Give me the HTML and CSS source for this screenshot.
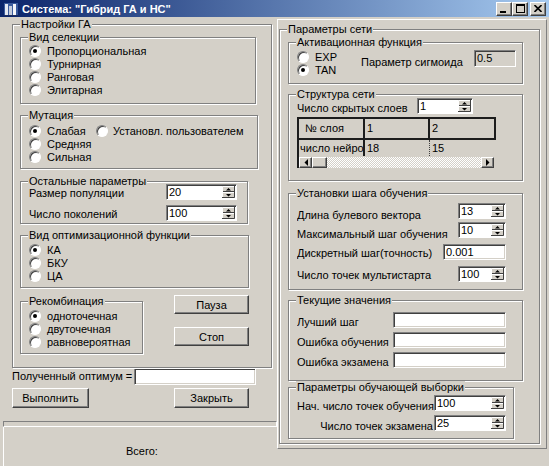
FILE: index.html
```html
<!DOCTYPE html>
<html lang="ru">
<head>
    <meta charset="UTF-8">
    <title>Система: "Гибрид ГА и НС"</title>
    <link rel="stylesheet" href="styles.css">
</head>
<body>
<div class="window">
    <div class="titlebar">
        <svg class="app-icon" width="14" height="14" viewBox="0 0 14 14">
            <rect x="0" y="1" width="14" height="13" fill="#3a5a9c"/>
            <rect x="1" y="2" width="3" height="11" fill="#e4e8f0"/>
            <rect x="5" y="4" width="3" height="9" fill="#c4ccdc"/>
            <rect x="9" y="2" width="3" height="11" fill="#f4f6fa"/>
            <path d="M0 13.5H14" stroke="#1c2c5c"/>
        </svg>
        <span class="title">Система: "Гибрид ГА и НС"</span>
        <div class="caption-buttons">
            <span class="cbtn"><svg width="8" height="8" viewBox="0 0 8 8"><rect x="0" y="6" width="6" height="2" fill="#000"/></svg></span>
            <span class="cbtn"><svg width="9" height="9" viewBox="0 0 9 9"><rect x="0.5" y="0.5" width="8" height="8" fill="none" stroke="#000"/><rect x="0" y="0" width="9" height="2" fill="#000"/></svg></span>
            <span class="cbtn close"><svg width="8" height="7" viewBox="0 0 8 7"><path d="M0.5 0L7.5 7M7.5 0L0.5 7" stroke="#000" stroke-width="1.6"/></svg></span>
        </div>
    </div>

    <div class="client">
        <div class="left-col">
            <div class="left-panel">
                <div class="group ga-settings">
                    <span class="group-title">Настройки ГА</span>

                    <div class="group selection">
                        <span class="group-title">Вид селекции</span>
                        <div class="opt"><span class="radio checked"></span>Пропорциональная</div>
                        <div class="opt"><span class="radio"></span>Турнирная</div>
                        <div class="opt"><span class="radio"></span>Ранговая</div>
                        <div class="opt"><span class="radio"></span>Элитарная</div>
                    </div>

                    <div class="group mutation">
                        <span class="group-title">Мутация</span>
                        <div class="opt-line">
                            <div class="opt"><span class="radio checked"></span>Слабая</div>
                            <div class="opt"><span class="radio"></span>Установл. пользователем</div>
                        </div>
                        <div class="opt"><span class="radio"></span>Средняя</div>
                        <div class="opt"><span class="radio"></span>Сильная</div>
                    </div>

                    <div class="group other-params">
                        <span class="group-title">Остальные параметры</span>
                        <div class="field">
                            <span class="lbl">Размер популяции</span>
                            <div class="spin"><span class="val">20</span><svg width="13" height="12" viewBox="0 0 13 12"><rect width="13" height="12" fill="#d4d0c8"/><path d="M0.5 12V0.5H12" stroke="#fff" fill="none"/><path d="M0 11.5H12.5V0" stroke="#404040" fill="none"/><path d="M1 5.5H12" stroke="#404040"/><path d="M1 6.5H12" stroke="#fff"/><path d="M4 4.5H9L6.5 2Z M4 8H9L6.5 10.5Z" fill="#000"/></svg></div>
                        </div>
                        <div class="field">
                            <span class="lbl">Число поколений</span>
                            <div class="spin"><span class="val">100</span><svg width="13" height="12" viewBox="0 0 13 12"><rect width="13" height="12" fill="#d4d0c8"/><path d="M0.5 12V0.5H12" stroke="#fff" fill="none"/><path d="M0 11.5H12.5V0" stroke="#404040" fill="none"/><path d="M1 5.5H12" stroke="#404040"/><path d="M1 6.5H12" stroke="#fff"/><path d="M4 4.5H9L6.5 2Z M4 8H9L6.5 10.5Z" fill="#000"/></svg></div>
                        </div>
                    </div>

                    <div class="group opt-func">
                        <span class="group-title">Вид оптимизационной функции</span>
                        <div class="opt"><span class="radio checked"></span>КА</div>
                        <div class="opt"><span class="radio"></span>БКУ</div>
                        <div class="opt"><span class="radio"></span>ЦА</div>
                    </div>

                    <div class="recomb-row">
                        <div class="group recomb">
                            <span class="group-title">Рекомбинация</span>
                            <div class="opt"><span class="radio checked"></span>одноточечная</div>
                            <div class="opt"><span class="radio"></span>двуточечная</div>
                            <div class="opt"><span class="radio"></span>равновероятная</div>
                        </div>
                        <div class="side-buttons">
                            <button class="btn">Пауза</button>
                            <button class="btn">Стоп</button>
                        </div>
                    </div>
                </div>

                <div class="optimum-row">
                    <span class="lbl">Полученный оптимум =</span>
                    <div class="edit"></div>
                </div>

                <div class="action-row">
                    <button class="btn btn-run">Выполнить</button>
                    <button class="btn btn-close">Закрыть</button>
                </div>
            </div>
            <div class="progress"></div>
            <div class="status">Всего:</div>
        </div>

        <div class="right-panel">
            <div class="group net-params">
                <span class="group-title">Параметры сети</span>

                <div class="group activation">
                    <span class="group-title">Активационная функция</span>
                    <div class="radio-col">
                        <div class="opt"><span class="radio"></span>EXP</div>
                        <div class="opt"><span class="radio checked"></span>TAN</div>
                    </div>
                    <div class="sigmoid">
                        <span class="lbl">Параметр сигмоида</span>
                        <div class="edit disabled">0.5</div>
                    </div>
                </div>

                <div class="group structure">
                    <span class="group-title">Структура сети</span>
                    <div class="field">
                        <span class="lbl">Число скрытых слоев</span>
                        <div class="spin"><span class="val">1</span><svg width="13" height="12" viewBox="0 0 13 12"><rect width="13" height="12" fill="#d4d0c8"/><path d="M0.5 12V0.5H12" stroke="#fff" fill="none"/><path d="M0 11.5H12.5V0" stroke="#404040" fill="none"/><path d="M1 5.5H12" stroke="#404040"/><path d="M1 6.5H12" stroke="#fff"/><path d="M4 4.5H9L6.5 2Z M4 8H9L6.5 10.5Z" fill="#000"/></svg></div>
                    </div>
                    <div class="grid">
                        <div class="grid-row grid-head">
                            <div class="cell">№ слоя</div>
                            <div class="cell">1</div>
                            <div class="cell">2</div>
                        </div>
                        <div class="grid-row grid-body">
                            <div class="cell">число нейронов</div>
                            <div class="cell focus">18</div>
                            <div class="cell">15</div>
                        </div>
                        <div class="hscroll">
                            <span class="sb-btn"><svg width="4" height="7" viewBox="0 0 4 7"><path d="M4 0V7L0.5 3.5Z" fill="#000"/></svg></span>
                            <span class="sb-thumb"></span>
                            <span class="sb-track"></span>
                            <span class="sb-btn"><svg width="4" height="7" viewBox="0 0 4 7"><path d="M0 0V7L3.5 3.5Z" fill="#000"/></svg></span>
                        </div>
                    </div>
                </div>

                <div class="group training">
                    <span class="group-title">Установки шага обучения</span>
                    <div class="field low">
                        <span class="lbl">Длина булевого вектора</span>
                        <div class="spin"><span class="val">13</span><svg width="13" height="12" viewBox="0 0 13 12"><rect width="13" height="12" fill="#d4d0c8"/><path d="M0.5 12V0.5H12" stroke="#fff" fill="none"/><path d="M0 11.5H12.5V0" stroke="#404040" fill="none"/><path d="M1 5.5H12" stroke="#404040"/><path d="M1 6.5H12" stroke="#fff"/><path d="M4 4.5H9L6.5 2Z M4 8H9L6.5 10.5Z" fill="#000"/></svg></div>
                    </div>
                    <div class="field low">
                        <span class="lbl">Максимальный шаг обучения</span>
                        <div class="spin"><span class="val">10</span><svg width="13" height="12" viewBox="0 0 13 12"><rect width="13" height="12" fill="#d4d0c8"/><path d="M0.5 12V0.5H12" stroke="#fff" fill="none"/><path d="M0 11.5H12.5V0" stroke="#404040" fill="none"/><path d="M1 5.5H12" stroke="#404040"/><path d="M1 6.5H12" stroke="#fff"/><path d="M4 4.5H9L6.5 2Z M4 8H9L6.5 10.5Z" fill="#000"/></svg></div>
                    </div>
                    <div class="field wide">
                        <span class="lbl">Дискретный шаг(точность)</span>
                        <div class="edit">0.001</div>
                    </div>
                    <div class="field">
                        <span class="lbl">Число точек мультистарта</span>
                        <div class="spin"><span class="val">100</span><svg width="13" height="12" viewBox="0 0 13 12"><rect width="13" height="12" fill="#d4d0c8"/><path d="M0.5 12V0.5H12" stroke="#fff" fill="none"/><path d="M0 11.5H12.5V0" stroke="#404040" fill="none"/><path d="M1 5.5H12" stroke="#404040"/><path d="M1 6.5H12" stroke="#fff"/><path d="M4 4.5H9L6.5 2Z M4 8H9L6.5 10.5Z" fill="#000"/></svg></div>
                    </div>
                </div>

                <div class="group current">
                    <span class="group-title">Текущие значения</span>
                    <div class="field"><span class="lbl">Лучший шаг</span><div class="edit"></div></div>
                    <div class="field"><span class="lbl">Ошибка обучения</span><div class="edit"></div></div>
                    <div class="field"><span class="lbl">Ошибка экзамена</span><div class="edit"></div></div>
                </div>

                <div class="group sample">
                    <span class="group-title">Параметры обучающей выборки</span>
                    <div class="field">
                        <span class="lbl">Нач. число точек обучения</span>
                        <div class="spin"><span class="val">100</span><svg width="13" height="12" viewBox="0 0 13 12"><rect width="13" height="12" fill="#d4d0c8"/><path d="M0.5 12V0.5H12" stroke="#fff" fill="none"/><path d="M0 11.5H12.5V0" stroke="#404040" fill="none"/><path d="M1 5.5H12" stroke="#404040"/><path d="M1 6.5H12" stroke="#fff"/><path d="M4 4.5H9L6.5 2Z M4 8H9L6.5 10.5Z" fill="#000"/></svg></div>
                    </div>
                    <div class="field">
                        <span class="lbl">Число точек экзамена</span>
                        <div class="spin"><span class="val">25</span><svg width="13" height="12" viewBox="0 0 13 12"><rect width="13" height="12" fill="#d4d0c8"/><path d="M0.5 12V0.5H12" stroke="#fff" fill="none"/><path d="M0 11.5H12.5V0" stroke="#404040" fill="none"/><path d="M1 5.5H12" stroke="#404040"/><path d="M1 6.5H12" stroke="#fff"/><path d="M4 4.5H9L6.5 2Z M4 8H9L6.5 10.5Z" fill="#000"/></svg></div>
                    </div>
                </div>
            </div>
        </div>
    </div>
</div>
</body>
</html>
```

FILE: styles.css
```css
* {
    box-sizing: border-box;
}
body {
    margin: 0;
    background: #d4d0c8;
    font-family: "Liberation Sans", Arial, sans-serif;
    font-size: 11px;
    color: #000;
}
.window {
    width: 549px;
    height: 466px;
    overflow: hidden;
    background: #d4d0c8;
}

/* title bar */
.titlebar {
    height: 17px;
    display: flex;
    align-items: center;
    padding: 0 3px 0 4px;
    background: linear-gradient(to right, #0a246a, #a6caf0);
}
.app-icon {
    flex: none;
}
.title {
    margin-left: 4px;
    color: #fff;
    font-weight: bold;
    white-space: nowrap;
}
.caption-buttons {
    margin-left: auto;
    display: flex;
}
.cbtn {
    width: 16px;
    height: 14px;
    display: flex;
    align-items: center;
    justify-content: center;
    background: #d4d0c8;
    border: 1px solid;
    border-color: #fff #404040 #404040 #fff;
    box-shadow: inset -1px -1px 0 #808080;
}
.cbtn.close {
    margin-left: 2px;
}

/* common controls */
.group {
    position: relative;
    border: 1px solid #808080;
    box-shadow: 1px 1px 0 #fff, inset 1px 1px 0 #fff;
}
.group-title {
    position: absolute;
    top: -7px;
    left: 7px;
    padding: 0 1px;
    background: #d4d0c8;
    line-height: 13px;
    white-space: nowrap;
}
.opt {
    display: flex;
    align-items: center;
    gap: 6px;
    height: 13px;
    white-space: nowrap;
}
.radio {
    position: relative;
    flex: none;
    width: 12px;
    height: 12px;
    border-radius: 50%;
    border: 1px solid;
    border-color: #808080 #fff #fff #808080;
    background: #fff;
    box-shadow: inset 1px 1px 0 #404040;
}
.radio.checked::after {
    content: "";
    position: absolute;
    left: 3px;
    top: 3px;
    width: 4px;
    height: 4px;
    border-radius: 50%;
    background: #000;
}
.edit {
    height: 16px;
    padding: 1px 2px;
    background: #fff;
    border: 1px solid;
    border-color: #808080 #fff #fff #808080;
    box-shadow: inset 1px 1px 0 #404040, inset -1px -1px 0 #d4d0c8;
    line-height: 12px;
}
.edit.disabled {
    background: #d4d0c8;
}
.spin {
    display: flex;
    height: 16px;
    padding: 1px;
    background: #fff;
    border: 1px solid;
    border-color: #808080 #fff #fff #808080;
    box-shadow: inset 1px 1px 0 #404040;
}
.spin .val {
    flex: 1;
    padding-left: 1px;
    line-height: 12px;
}
.spin svg {
    flex: none;
}
.field {
    display: flex;
    align-items: flex-start;
    height: 16px;
}
.lbl {
    flex: none;
    line-height: 13px;
    white-space: nowrap;
    overflow: hidden;
}
.btn {
    display: flex;
    align-items: center;
    justify-content: center;
    height: 20px;
    padding: 0;
    font: inherit;
    color: #000;
    background: #d4d0c8;
    border: 1px solid;
    border-color: #fff #404040 #404040 #fff;
    box-shadow: inset -1px -1px 0 #808080;
}

/* layout */
.client {
    display: flex;
    height: 449px;
}
.left-col {
    width: 277px;
    display: flex;
    flex-direction: column;
}
.left-panel {
    height: 404px;
    padding: 7px 0 0 12px;
}
.ga-settings {
    width: 260px;
    height: 344px;
    padding: 12px 0 0 7px;
}
.selection {
    width: 236px;
    height: 67px;
    padding: 6px 0 0 8px;
}
.mutation {
    width: 238px;
    height: 54px;
    margin-top: 11px;
    padding: 8px 0 0 8px;
}
.opt-line {
    display: flex;
}
.opt-line .opt:first-child {
    width: 67px;
}
.opt-line .opt:last-child {
    gap: 5px;
}
.other-params {
    width: 228px;
    height: 43px;
    margin-top: 12px;
    padding: 2px 0 0 8px;
}
.other-params .field + .field {
    margin-top: 5px;
}
.other-params .lbl {
    width: 137px;
    margin-top: 3px;
}
.other-params .spin {
    width: 71px;
}
.opt-func {
    width: 229px;
    height: 53px;
    margin-top: 11px;
    padding: 7px 0 0 8px;
}
.recomb-row {
    display: flex;
    margin-top: 7px;
}
.recomb {
    width: 123px;
    height: 53px;
    margin-top: 6px;
    padding: 7px 0 0 8px;
}
.side-buttons {
    margin-left: 31px;
    display: flex;
    flex-direction: column;
    gap: 13px;
}
.side-buttons .btn {
    width: 75px;
    height: 19px;
}
.optimum-row {
    display: flex;
    align-items: center;
    height: 17px;
}
.optimum-row .lbl {
    width: 122px;
}
.optimum-row .edit {
    width: 122px;
    height: 17px;
}
.action-row {
    display: flex;
    margin-top: 3px;
}
.btn-run {
    width: 77px;
}
.btn-close {
    width: 75px;
    margin-left: 85px;
}
.progress {
    height: 6px;
    margin-left: 3px;
    border: 1px solid;
    border-color: #808080 #fff #fff #808080;
}
.status {
    flex: 1;
    margin-left: 3px;
    padding: 18px 0 0 122px;
    border-left: 1px solid #fff;
    line-height: 13px;
}

/* right side */
.right-panel {
    width: 270px;
    height: 430px;
    margin-top: 2px;
    padding: 9px 0 0 1px;
    border: 1px solid;
    border-color: #fff #808080 #808080 #fff;
}
.net-params {
    width: 261px;
    height: 415px;
    padding: 12px 0 0 8px;
}
.activation {
    display: flex;
    width: 235px;
    height: 42px;
    padding: 7px 0 0 8px;
}
.radio-col {
    width: 64px;
}
.sigmoid {
    display: flex;
    align-items: flex-start;
}
.sigmoid .lbl {
    width: 113px;
    margin-top: 6px;
}
.sigmoid .edit {
    width: 42px;
    height: 17px;
}
.structure {
    width: 235px;
    height: 87px;
    margin-top: 10px;
    padding: 3px 0 0 8px;
}
.structure .lbl {
    width: 120px;
    margin-top: 4px;
}
.structure .spin {
    width: 56px;
}
.grid {
    width: 199px;
    height: 51px;
    margin-top: 3px;
    border-top: 2px solid #1c1c1c;
    border-left: 2px solid #1c1c1c;
}
.grid-row {
    display: grid;
    grid-template-columns: 66px 65px 66px;
}
.cell {
    padding-left: 2px;
    white-space: nowrap;
    overflow: hidden;
}
.grid-head .cell {
    height: 21px;
    line-height: 19px;
    border-right: 2px solid #1c1c1c;
    border-bottom: 2px solid #1c1c1c;
}
.grid-head .cell:first-child {
    padding-left: 6px;
}
.grid-body .cell {
    height: 16px;
    line-height: 16px;
    border-right: 1px dotted #404040;
}
.grid-body .cell:first-child {
    padding-left: 1px;
    border-right: 2px solid #1c1c1c;
}
.grid-body .cell:last-child {
    border-right: none;
}
.hscroll {
    display: flex;
    width: 195px;
    height: 11px;
    margin-top: 1px;
}
.sb-btn, .sb-thumb {
    flex: none;
    display: flex;
    align-items: center;
    justify-content: center;
    width: 13px;
    height: 11px;
    background: #d4d0c8;
    border: 1px solid;
    border-color: #fff #404040 #404040 #fff;
    box-shadow: inset -1px -1px 0 #808080;
}
.sb-thumb {
    width: 15px;
}
.sb-track {
    flex: 1;
    background: repeating-conic-gradient(#d4d0c8 0 25%, #fff 0 50%) 0 0 / 2px 2px;
}
.training {
    width: 235px;
    height: 97px;
    margin-top: 12px;
    padding: 9px 0 0 8px;
}
.training .field:nth-child(3) {
    margin-top: 3px;
}
.training .field:nth-child(4),
.training .field:nth-child(5) {
    margin-top: 6px;
}
.training .lbl {
    width: 161px;
    margin-top: 3px;
}
.training .low .lbl {
    margin-top: 6px;
}
.training .wide .lbl {
    width: 146px;
}
.training .spin {
    width: 48px;
}
.training .edit {
    width: 63px;
}
.current {
    width: 235px;
    height: 81px;
    margin-top: 10px;
    padding: 11px 0 0 8px;
}
.current .field + .field {
    margin-top: 4px;
}
.current .lbl {
    width: 96px;
    margin-top: 4px;
}
.current .edit {
    width: 113px;
}
.sample {
    width: 226px;
    height: 52px;
    margin-top: 6px;
    padding: 7px 0 0 8px;
}
.sample .field + .field {
    margin-top: 4px;
}
.sample .lbl {
    width: 137px;
    margin-top: 5px;
    padding-right: 1px;
    text-align: right;
}
.sample .spin {
    width: 72px;
}
```
